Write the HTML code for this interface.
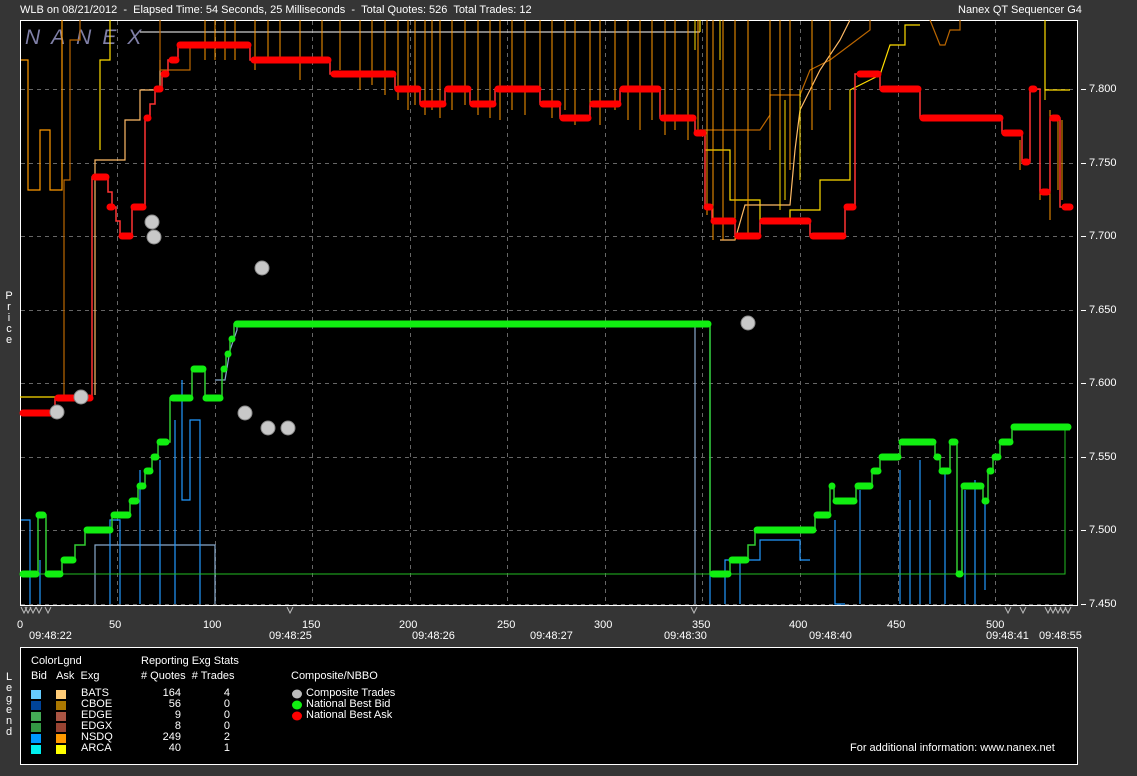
<!DOCTYPE html>
<html><head><meta charset="utf-8"><style>
html,body{margin:0;padding:0;background:#353535;width:1137px;height:776px;overflow:hidden;font-family:"Liberation Sans",sans-serif;color:#fff;font-size:11px}
.t{position:absolute;white-space:nowrap}
</style></head><body>
<div class="t" style="left:20px;top:4px">WLB on 08/21/2012&nbsp; - &nbsp;Elapsed Time: 54 Seconds, 25 Milliseconds&nbsp; - &nbsp;Total Quotes: 526&nbsp; Total Trades: 12</div>
<div class="t" style="left:958px;top:4px">Nanex QT Sequencer G4</div>
<div class="t" style="left:5px;top:291px;width:8px;line-height:11px;text-align:center">P<br>r<br>i<br>c<br>e</div>
<div class="t" style="left:5px;top:672px;width:8px;line-height:11px;text-align:center">L<br>e<br>g<br>e<br>n<br>d</div>
<svg style="position:absolute;left:0;top:0" width="1137" height="776">
<rect x="20.5" y="20.5" width="1057" height="585" fill="#000" stroke="#fff"/>
<g stroke="#666" stroke-dasharray="4,4" stroke-width="1">
<line x1="21" x2="1076" y1="89.5" y2="89.5"/><line x1="21" x2="1076" y1="163.5" y2="163.5"/><line x1="21" x2="1076" y1="236.5" y2="236.5"/><line x1="21" x2="1076" y1="310.5" y2="310.5"/><line x1="21" x2="1076" y1="383.5" y2="383.5"/><line x1="21" x2="1076" y1="457.5" y2="457.5"/><line x1="21" x2="1076" y1="530.5" y2="530.5"/><line x1="21" x2="1076" y1="604.5" y2="604.5"/>
<line x1="117.5" x2="117.5" y1="21" y2="605"/><line x1="215.5" x2="215.5" y1="21" y2="605"/><line x1="312.5" x2="312.5" y1="21" y2="605"/><line x1="410.5" x2="410.5" y1="21" y2="605"/><line x1="507.5" x2="507.5" y1="21" y2="605"/><line x1="605.5" x2="605.5" y1="21" y2="605"/><line x1="702.5" x2="702.5" y1="21" y2="605"/><line x1="800.5" x2="800.5" y1="21" y2="605"/><line x1="898.5" x2="898.5" y1="21" y2="605"/><line x1="995.5" x2="995.5" y1="21" y2="605"/>
</g>
<text x="25" y="44" font-family="Liberation Sans" font-style="italic" font-size="21" fill="#8080a8" letter-spacing="11">NANEX</text>
<!-- orange/yellow quote noise -->
<g stroke="#f90" stroke-width="1.2" fill="none">
<polyline points="21,60 28,60 28,190 40,190 40,130 50,130 50,190 62,190 62,20"/>
<polyline points="64,400 64,180 70,180 70,40 80,40 80,20" stroke="#b60"/>
<polyline points="95,395 95,160 125,160 125,120 140,120 140,90 160,90 160,60" stroke="#fb6"/>
<polyline points="110,20 110,60 100,60 100,150" stroke="#fd0"/>
<polyline points="140,32 700,32" stroke="#ccc"/>
<polyline points="160,20 160,70 190,70 190,45" stroke="#b60"/>
<polyline points="20,397 55,397" stroke="#fd0"/>
<polyline points="700,32 700,20" stroke="#fd0"/>
<polyline points="700,130 760,130 770,115 770,95 800,95 810,70 830,60 850,45 870,30 870,20" stroke="#b60"/>
<polyline points="705,150 730,150 730,200 760,200 760,220 790,220 790,210 820,210 820,180 850,180 850,90 880,75 890,45 905,45 905,25 920,25" stroke="#fd0"/>
<polyline points="720,240 735,240 745,205 790,205 795,150 800,110 820,70 840,40 850,20" stroke="#fb6"/>
<polyline points="930,20 940,45 945,45 950,30 960,30 960,20" stroke="#b60"/>
<polyline points="1045,20 1045,90 1070,90" stroke="#fd0"/>
</g>
<g stroke="#f90" stroke-width="1">
<path d="M205 20V60M215 20V60M225 20V60M235 20V60M255 20V70M268 20V60M280 20V60M300 20V80M322 20V60M340 20V70M360 20V90M372 20V85M385 20V95M398 20V100M408 20V110M415 20V105M425 20V115M432 20V110M440 20V118M452 20V110M465 20V105M478 20V115M490 20V118M500 20V120M512 20V110M525 20V115M540 20V105M552 20V118M565 20V110M575 20V125M590 20V118M600 20V125M615 20V110M628 20V120M640 20V130M652 20V120M665 20V135M675 20V130M688 20V140M698 20V135M707 20V215M713 20V240M723 20V240M735 20V240M748 20V235M770 20V150M780 20V200M790 20V170M812 20V130M830 20V110M1020 140V170M1040 100V200M1050 110V220M1058 120V190M1062 120V200"/>
</g>
<g stroke="#fd0" stroke-width="1"><path d="M695 20V50M720 20V60M780 130V210M785 100V200M800 90V180M1045 20V100M1040 130V170"/></g>
<!-- blue/bid noise -->
<g stroke="#29f" stroke-width="1.2" fill="none">
<polyline points="21,520 30,520 30,604"/><polyline points="40,560 40,604"/>
<polyline points="95,604 95,545 215,545 215,604" stroke="#8ac"/>
<polyline points="110,604 110,520 120,520 120,604"/>
<polyline points="140,470 140,604"/><polyline points="160,460 160,604"/>
<polyline points="175,420 175,604"/><polyline points="182,380 182,500 190,500 190,420 200,420 200,604"/>
<polyline points="215,380 225,380 230,350 237,330 237,324 695,324 695,604" stroke="#8ac"/>
<polyline points="710,330 710,604"/>
<polyline points="725,604 725,560 760,560 760,540 800,540 800,560 810,560"/>
<polyline points="740,604 740,560"/>
<polyline points="835,520 835,604 845,604"/>
<polyline points="860,490 860,604"/>
<polyline points="900,470 900,604"/><polyline points="910,500 910,604"/><polyline points="920,460 920,604"/><polyline points="930,500 930,604"/><polyline points="945,470 945,604"/><polyline points="965,490 965,604"/><polyline points="975,480 975,604"/><polyline points="985,500 985,590"/>
</g>
<polyline points="21,574 1065,574 1065,430 1070,430" stroke="#2b2" stroke-width="1" fill="none"/>
<!-- NBBO ask -->
<polyline fill="none" stroke="#f33" stroke-width="1.5" points="20,413 55,413 55,398 92,398 92,177 108,177 108,192 112,192 112,207 116,207 116,221 120,221 120,236 132,236 132,207 145,207 145,118 150,118 150,104 155,104 155,89 162,89 162,74 168,74 168,60 178,60 178,45 250,45 250,60 330,60 330,74 395,74 395,89 420,89 420,104 445,104 445,89 470,89 470,104 495,104 495,89 540,89 540,104 560,104 560,118 590,118 590,104 620,104 620,89 660,89 660,118 695,118 695,133 705,133 705,207 712,207 712,221 735,221 735,236 760,236 760,221 810,221 810,236 845,236 845,207 855,207 855,74 880,74 880,89 920,89 920,118 1002,118 1002,133 1022,133 1022,162 1030,162 1030,89 1040,89 1040,192 1050,192 1050,118 1060,118 1060,207 1072,207"/>
<path fill="none" stroke="#f00" stroke-width="7" stroke-linecap="round" d="M23 413H53M58 398H90M95 177H106M110 207H112M122 236H130M134 207H143M147 118H148M157 89H160M164 74H166M172 60H176M180 45H248M254 60H328M334 74H393M398 89H418M423 104H443M448 89H468M473 104H493M498 89H538M543 104H558M563 118H588M593 104H618M623 89H658M663 118H693M697 133H703M707 207H710M714 221H733M738 236H758M763 221H808M813 236H843M847 207H853M860 74H878M883 89H918M923 118H1000M1005 133H1020M1025 162H1027M1032 89H1034M1043 192H1047M1053 118H1057M1065 207H1070"/>
<!-- NBBO bid -->
<polyline fill="none" stroke="#3c3" stroke-width="1.5" points="20,574 38,574 38,515 46,515 46,574 62,574 62,560 75,560 75,545 85,545 85,530 112,530 112,515 130,515 130,501 138,501 138,486 145,486 145,471 152,471 152,457 158,457 158,442 170,442 170,398 192,398 192,369 205,369 205,398 222,398 222,369 226,369 226,354 230,354 230,339 234,339 234,324 710,324 710,574 730,574 730,560 748,560 748,545 755,545 755,530 815,530 815,515 830,515 830,486 834,486 834,501 856,501 856,486 872,486 872,471 880,471 880,457 900,457 900,442 935,442 935,457 940,457 940,471 950,471 950,442 957,442 957,574 962,574 962,486 983,486 983,501 988,501 988,471 993,471 993,457 1000,457 1000,442 1012,442 1012,427 1070,427"/>
<path fill="none" stroke="#1e1" stroke-width="7" stroke-linecap="round" d="M23 574H36M39 515H43M48 574H60M64 560H73M87 530H110M114 515H128M132 501H136M140 486H143M147 471H150M154 457H156M160 442H166M173 398H190M194 369H203M206 398H220M224 369H224M228 354H228M232 339H232M237 324H708M713 574H728M732 560H746M757 530H813M817 515H828M832 486H832M836 501H854M858 486H870M874 471H878M882 457H898M902 442H933M937 457H938M942 471H948M952 442H955M959 574H960M964 486H981M985 501H986M990 471H991M995 457H998M1002 442H1010M1014 427H1068"/>
<!-- composite trades -->
<g fill="#c8c8c8" stroke="#888" stroke-width="1">
<circle cx="57" cy="412" r="7"/><circle cx="81" cy="397" r="7"/><circle cx="152" cy="222" r="7"/><circle cx="154" cy="237" r="7"/><circle cx="262" cy="268" r="7"/><circle cx="245" cy="413" r="7"/><circle cx="268" cy="428" r="7"/><circle cx="288" cy="428" r="7"/><circle cx="748" cy="323" r="7"/>
</g>
<!-- trade markers -->
<g fill="none" stroke="#bbb" stroke-width="1">
<path d="M21 607l3 6 3-6M25 607l3 6 3-6M30 607l3 6 3-6M36 607l3 6 3-6M45 607l3 6 3-6M287 607l3 6 3-6M691 607l3 6 3-6M1005 607l3 6 3-6M1020 607l3 6 3-6M1045 607l3 6 3-6M1050 607l3 6 3-6M1055 607l3 6 3-6M1060 607l3 6 3-6M1065 607l3 6 3-6"/>
</g>
<g stroke="#fff"><path d="M1081 89.5h5M1081 163.5h5M1081 236.5h5M1081 310.5h5M1081 383.5h5M1081 457.5h5M1081 530.5h5M1081 604.5h5"/></g>
<rect x="20.5" y="647.5" width="1057" height="117" fill="#000" stroke="#fff"/>
<g fill="#6cf"><rect x="31" y="690" width="10" height="9"/></g>
<rect x="31" y="701" width="10" height="9" fill="#049"/><rect x="31" y="712" width="10" height="9" fill="#4a5"/><rect x="31" y="723" width="10" height="9" fill="#394"/><rect x="31" y="734" width="10" height="9" fill="#09f"/><rect x="31" y="745" width="10" height="9" fill="#0ee"/>
<rect x="56" y="690" width="10" height="9" fill="#fc7"/><rect x="56" y="701" width="10" height="9" fill="#a70"/><rect x="56" y="712" width="10" height="9" fill="#a54"/><rect x="56" y="723" width="10" height="9" fill="#943"/><rect x="56" y="734" width="10" height="9" fill="#f90"/><rect x="56" y="745" width="10" height="9" fill="#ff0"/>
<ellipse cx="297" cy="694" rx="5" ry="4.5" fill="#bbb"/><ellipse cx="297" cy="705" rx="5" ry="4.5" fill="#1e1"/><ellipse cx="297" cy="716" rx="5" ry="4.5" fill="#f00"/>
</svg>
<div class="t" style="left:1089px;top:83px">7.800</div>
<div class="t" style="left:1089px;top:157px">7.750</div>
<div class="t" style="left:1089px;top:230px">7.700</div>
<div class="t" style="left:1089px;top:304px">7.650</div>
<div class="t" style="left:1089px;top:377px">7.600</div>
<div class="t" style="left:1089px;top:451px">7.550</div>
<div class="t" style="left:1089px;top:524px">7.500</div>
<div class="t" style="left:1089px;top:598px">7.450</div>
<div class="t" style="left:17px;top:619px">0</div>
<div class="t" style="left:109px;top:619px">50</div>
<div class="t" style="left:203px;top:619px">100</div>
<div class="t" style="left:302px;top:619px">150</div>
<div class="t" style="left:399px;top:619px">200</div>
<div class="t" style="left:497px;top:619px">250</div>
<div class="t" style="left:594px;top:619px">300</div>
<div class="t" style="left:692px;top:619px">350</div>
<div class="t" style="left:789px;top:619px">400</div>
<div class="t" style="left:887px;top:619px">450</div>
<div class="t" style="left:986px;top:619px">500</div>
<div class="t" style="left:29px;top:630px">09:48:22</div>
<div class="t" style="left:269px;top:630px">09:48:25</div>
<div class="t" style="left:412px;top:630px">09:48:26</div>
<div class="t" style="left:530px;top:630px">09:48:27</div>
<div class="t" style="left:664px;top:630px">09:48:30</div>
<div class="t" style="left:809px;top:630px">09:48:40</div>
<div class="t" style="left:986px;top:630px">09:48:41</div>
<div class="t" style="left:1039px;top:630px">09:48:55</div>
<div class="t" style="left:31px;top:655px">ColorLgnd</div>
<div class="t" style="left:31px;top:670px">Bid&nbsp;&nbsp;&nbsp;Ask&nbsp; Exg</div>
<div class="t" style="left:81px;top:688px;line-height:11px">BATS<br>CBOE<br>EDGE<br>EDGX<br>NSDQ<br>ARCA</div>
<div class="t" style="left:141px;top:655px">Reporting Exg Stats</div>
<div class="t" style="left:141px;top:670px"># Quotes&nbsp; # Trades</div>
<div class="t" style="left:150px;top:688px;line-height:11px;width:31px;text-align:right">164<br>56<br>9<br>8<br>249<br>40</div>
<div class="t" style="left:210px;top:688px;line-height:11px;width:20px;text-align:right">4<br>0<br>0<br>0<br>2<br>1</div>
<div class="t" style="left:291px;top:670px">Composite/NBBO</div>
<div class="t" style="left:306px;top:688px;line-height:11px">Composite Trades<br>National Best Bid<br>National Best Ask</div>
<div class="t" style="left:850px;top:742px">For additional information: www.nanex.net</div>
</body></html>
